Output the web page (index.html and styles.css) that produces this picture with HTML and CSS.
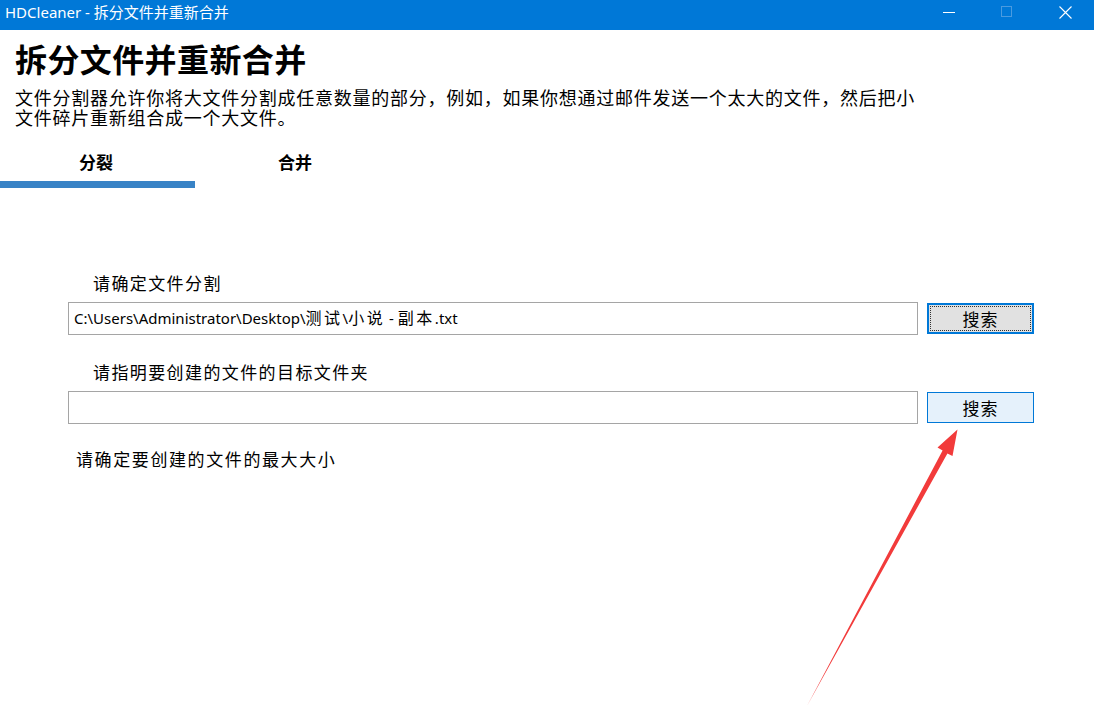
FILE: index.html
```html
<!DOCTYPE html>
<html lang="zh-CN">
<head>
  <meta charset="UTF-8">
  <meta name="viewport" content="width=device-width, initial-scale=1.0">
  <title>HDCleaner - 拆分文件并重新合并</title>
  <link rel="stylesheet" href="styles.css">
</head>
<body>

  <div class="titlebar">
    <div class="wintitle">HDCleaner - 拆分文件并重新合并</div>
    <div class="winbtns">
      <span class="winbtn"><svg width="12" height="12" viewBox="0 0 12 12"><path d="M0 6.5h12" stroke="#fff" stroke-width="1"/></svg></span>
      <span class="winbtn dim"><svg width="12" height="12" viewBox="0 0 12 12"><rect x="0.5" y="0.5" width="10" height="10" fill="none" stroke="#4a9be0" stroke-width="1"/></svg></span>
      <span class="winbtn"><svg width="13" height="13" viewBox="0 0 13 13"><path d="M0.5 0.5l12 12M12.5 0.5l-12 12" stroke="#fff" stroke-width="1.1"/></svg></span>
    </div>
  </div>

  <div class="page">
    <h1 class="heading">拆分文件并重新合并</h1>
    <div class="desc">
      <div class="line">文件分割器允许你将大文件分割成任意数量的部分，例如，如果你想通过邮件发送一个太大的文件，然后把小</div>
      <div class="line">文件碎片重新组合成一个大文件。</div>
    </div>

    <div class="tabs">
      <div class="tab active">分裂</div>
      <div class="tab second">合并</div>
    </div>

    <div class="form">
      <div class="label first">请确定文件分割</div>
      <div class="row">
        <div class="field">C:\Users\Administrator\Desktop\<span class="cjk">测试</span>\<span class="cjk">小说</span> - <span class="cjk">副本</span>.txt</div>
        <button class="btn focused">搜索</button>
      </div>

      <div class="label">请指明要创建的文件的目标文件夹</div>
      <div class="row">
        <div class="field"></div>
        <button class="btn hover">搜索</button>
      </div>

      <div class="label last">请确定要创建的文件的最大大小</div>
    </div>
  </div>

  <!-- red annotation arrow drawn over the screenshot -->
  <svg class="arrow" width="1094" height="713" viewBox="0 0 1094 713">
    <polygon points="807,706 942.6,450.6 937.5,447.5 957.5,429.5 952.5,456 947.4,453.4" fill="#f23b3b"/>
  </svg>

</body>
</html>
```

FILE: styles.css
```css
body{
  margin: 0;
  width: 1094px;
  height: 713px;
  overflow: hidden;
  background: #ffffff;
  color: #000000;
  font-family: "Noto Sans CJK SC", "Noto Sans", sans-serif;
  position: relative;
}

/* window title bar */
.titlebar{
  height: 30px;
  background-color: #0078d7;
  display: flex;
  justify-content: space-between;
  align-items: center;
}
.wintitle{
  padding-left: 5px;
  color: #ffffff;
  font-family: "Noto Sans", "Noto Sans CJK SC", sans-serif;
  font-size: 15px;
  line-height: 24px;
  margin-top: -6px;
}
.winbtns{
  display: flex;
  height: 100%;
}
.winbtn{
  width: 58px;
  display: flex;
  justify-content: center;
  align-items: center;
  margin-top: -6px;
}

/* header texts */
.heading{
  margin: 8px 0 0 15px;
  font-size: 32px;
  line-height: 40px;
  font-weight: bold;
  letter-spacing: 0.4px;
}
.desc{
  margin: 9px 0 0 15px;
  font-size: 18px;
  letter-spacing: 0.75px;
}
.desc .line{
  height: 20px;
  line-height: 20px;
}

/* tabs */
.tabs{
  display: flex;
}
.tab{
  width: 195px;
  text-align: center;
  padding-top: 25px;
  padding-bottom: 9px;
  font-size: 17px;
  line-height: 20px;
  font-weight: bold;
  border-bottom: 7px solid transparent;
}
.tab.active{
  border-bottom-color: #3883c6;
  padding-right: 3px;
  width: 192px;
}
.tab.second{
  width: 200px;
}

/* form */
.form{
  padding-top: 85px;
}
.label{
  margin: 27px 0 9px 93px;
  font-size: 17px;
  line-height: 20px;
  letter-spacing: 1.4px;
}
.label.first{
  margin-top: 0;
}
.label.last{
  margin: 25px 0 0 76px;
  letter-spacing: 1.6px;
}
.row{
  display: flex;
  align-items: center;
  padding-left: 68px;
}
.field{
  width: 843px;
  height: 31px;
  border: 1px solid #a5a5a5;
  padding-left: 5px;
  color: #000;
  font-family: "Noto Sans", "Noto Sans CJK SC", sans-serif;
  font-size: 15px;
  line-height: 29px;
  white-space: nowrap;
}
.field .cjk{
  font-family: "Noto Sans CJK SC", sans-serif;
  font-size: 16px;
  letter-spacing: 2.5px;
}
.btn{
  margin-left: 9px;
  width: 107px;
  height: 31px;
  font-family: "Noto Sans CJK SC", sans-serif;
  font-size: 17px;
  line-height: 20px;
  letter-spacing: 1px;
  color: #000;
  padding: 0;
}
.btn.focused{
  background: #e1e1e1;
  border: 2px solid #0078d7;
  outline: 1px dotted #333;
  outline-offset: -4px;
}
.btn.hover{
  background: #e5f1fb;
  border: 1px solid #0078d7;
}

/* annotation overlay */
.arrow{
  position: absolute;
  left: 0;
  top: 0;
  pointer-events: none;
}
```
